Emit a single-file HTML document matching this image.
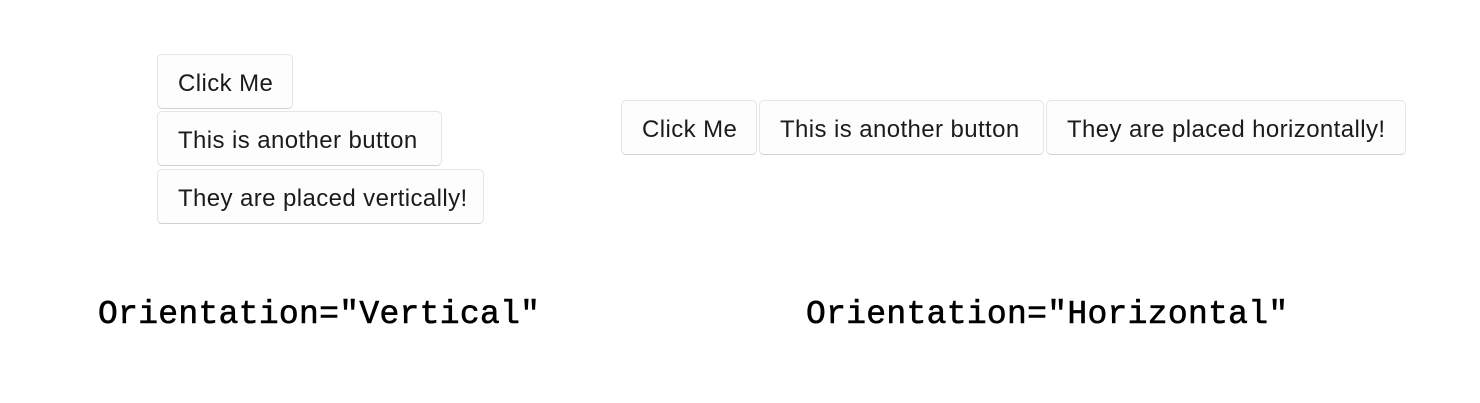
<!DOCTYPE html>
<html><head><style>
body{margin:0;width:1480px;height:403px;background:#fff;position:relative;overflow:hidden;font-family:"Liberation Sans",sans-serif}
.b{position:absolute;box-sizing:border-box;border:1px solid #e5e5e5;border-bottom-color:#d0d0d0;border-radius:5px;background:#fdfdfd;color:#1b1b1b;font-size:24px;letter-spacing:0.4px;line-height:52px;padding-top:3px;padding-left:20px;white-space:nowrap;height:55px}
.m{position:absolute;font-family:"Liberation Mono",monospace;font-size:33px;color:#000;top:293px;line-height:44px;letter-spacing:0.3px;-webkit-text-stroke:0.6px #000}
</style></head><body>
<div class="b" style="left:157px;top:54px;width:136px">Click Me</div>
<div class="b" style="left:157px;top:111px;width:285px">This is another button</div>
<div class="b" style="left:157px;top:169px;width:327px">They are placed vertically!</div>
<div class="b" style="left:621px;top:100px;width:136px">Click Me</div>
<div class="b" style="left:759px;top:100px;width:285px">This is another button</div>
<div class="b" style="left:1046px;top:100px;width:360px">They are placed horizontally!</div>
<div class="m" style="left:98px">Orientation="Vertical"</div>
<div class="m" style="left:806px">Orientation="Horizontal"</div>
</body></html>
